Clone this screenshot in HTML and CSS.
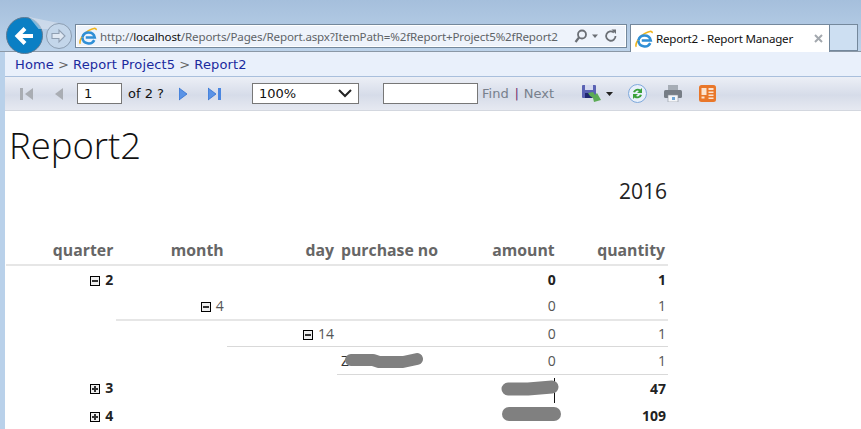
FILE: index.html
```html
<!DOCTYPE html>
<html lang="en">
<head>
<meta charset="utf-8">
<title>Report2 - Report Manager</title>
<link rel="stylesheet" href="styles.css">
</head>
<body>
<svg class="defs" width="0" height="0" aria-hidden="true">
  <symbol id="ie" viewBox="0 0 20 20">
    <path d="M1.500 18.500C-.5 16 4.500 7.500 10.500 4 15 1.400 19.500.4 19 3.500" fill="none" stroke="#f0b51e" stroke-width="1.800"/>
    <path d="M3.800 11.600A7 6.800 0 0 1 17.500 11.600H7.500M17 14.500A7 6.800 0 0 1 3.800 12" fill="none" stroke="#2f8fd6" stroke-width="2.800"/>
  </symbol>
</svg>
<header class="chrome">
  <button class="back" aria-label="Back"><svg width="24" height="24" viewBox="0 0 24 24"><path d="M20 12H5M12 4.500 4.500 12l7.500 7.500" fill="none" stroke="#fff" stroke-width="4"/></svg></button>
  <button class="forward" aria-label="Forward"><svg width="18" height="18" viewBox="0 0 18 18"><path d="M2 6.500h7V3l6 6-6 6v-3.500H2z" fill="#dfe8f3" stroke="#8f9fb2" stroke-width="1.100"/></svg></button>
  <div class="address">
    <svg class="ie" width="18" height="18"><use href="#ie"/></svg>
    <span class="url">http://<b>localhost</b>/Reports/Pages/Report.aspx?ItemPath=%2fReport+Project5%2fReport2</span>
    <svg class="addr-tools" width="46" height="16" viewBox="0 0 46 16"><circle cx="9" cy="6.500" r="4" fill="none" stroke="#6b6f75" stroke-width="1.800"/><path d="M6 9.500 2.500 14" stroke="#6b6f75" stroke-width="2.200"/><path d="M19 6.500h6l-3 3.500z" fill="#6b6f75"/><path d="M42.500 8a4.700 4.700 0 1 1-1.600-3.500" fill="none" stroke="#6b6f75" stroke-width="1.800"/><path d="M38.500 1.500h4.500V6z" fill="#6b6f75"/></svg>
  </div>
  <div class="tab">
    <svg class="ie" width="18" height="18"><use href="#ie"/></svg>
    <span class="tab-title">Report2 - Report Manager</span>
    <svg class="tab-close" width="9" height="9" viewBox="0 0 9 9"><path d="M1 1l7 7M8 1 1 8" stroke="#a3a8ae" stroke-width="2"/></svg>
  </div>
  <div class="new-tab"></div>
</header>
<div class="frame">
  <nav class="crumbs">
    <a>Home</a><span class="sep">&gt;</span><a>Report Project5</a><span class="sep">&gt;</span><a>Report2</a>
  </nav>
  <div class="toolbar">
    <svg class="tool first" width="13" height="14" viewBox="0 0 13 14"><rect x="0" y="1" width="3" height="12" fill="#a9adb3"/><path d="M13 1v12L5 7z" fill="#a9adb3"/></svg>
    <svg class="tool prev" width="8" height="14" viewBox="0 0 8 14"><path d="M8 1v12L0 7z" fill="#a9adb3"/></svg>
    <input class="box page-box" value="1" aria-label="Page">
    <span class="of">of 2 ?</span>
    <svg class="tool next" width="8" height="14" viewBox="0 0 8 14"><path d="M0 1v12l8-6z" fill="#5a93e6" stroke="#2f6fd0" stroke-width=".8"/></svg>
    <svg class="tool last" width="13" height="14" viewBox="0 0 13 14"><path d="M0 1v12l8-6z" fill="#5a93e6" stroke="#2f6fd0" stroke-width=".8"/><rect x="10" y="1" width="3" height="12" fill="#4a86e0"/></svg>
    <div class="box zoom-box"><span>100%</span><svg width="14" height="9" viewBox="0 0 14 9"><path d="M1 1l6 6 6-6" fill="none" stroke="#222" stroke-width="2"/></svg></div>
    <input class="box find-box" aria-label="Find">
    <span class="find">Find</span><span class="bar">|</span><span class="find">Next</span>
    <svg class="tool save" width="19" height="18" viewBox="0 0 19 18"><rect x="0" y="0" width="14" height="13" rx="1" fill="#5a62b4"/><rect x="3" y="0" width="8" height="5" fill="#d5daf0"/><rect x="3" y="8" width="7" height="5" fill="#1f2870"/><path d="M6 8l5-1 2 3 2-2 4 7-7 2-1-4-3-2z" fill="#5cab55"/></svg>
    <svg class="tool drop" width="7" height="4" viewBox="0 0 7 4"><path d="M0 0h7L3.500 4z" fill="#222"/></svg>
    <svg class="tool refresh" width="19" height="19" viewBox="0 0 19 19"><circle cx="9.500" cy="9.500" r="9" fill="#e8f0fb" stroke="#7fa9dc"/><path d="M5 8a5 5 0 0 1 7.500-2.500L14 4v5H9l2-2a3 3 0 0 0-4 1.500z" fill="#3aa13a"/><path d="M14 11a5 5 0 0 1-7.500 2.500L5 15v-5h5l-2 2a3 3 0 0 0 4-1.500z" fill="#3aa13a"/></svg>
    <svg class="tool print" width="18" height="17" viewBox="0 0 18 17"><rect x="4" y="0" width="10" height="6" fill="#a6adb6"/><rect x="0" y="5" width="18" height="8" rx="1.500" fill="#767d86"/><rect x="4" y="10" width="10" height="7" fill="#f4f6f9" stroke="#8a929c" stroke-width=".6"/><rect x="8" y="12" width="3" height="3" fill="#6fa6d8"/></svg>
    <svg class="tool atom" width="17" height="17" viewBox="0 0 17 17"><rect width="17" height="17" rx="2.500" fill="#e9772a"/><path d="M2.500 3h5v7h-5zM9.500 3h5v2h-5zM9.500 6.500h5v1.500h-5zM9.500 9.500h5V11h-5zM2.500 11.500h3v2h-3zM9.500 12.500h5V14h-5z" fill="#fbe3cf"/></svg>
  </div>
  <main class="report">
    <h1>Report2</h1>
    <div class="year">2016</div>
    <table class="grid">
      <thead>
        <tr><th>quarter</th><th>month</th><th>day</th><th class="left">purchase no</th><th>amount</th><th>quantity</th></tr>
      </thead>
      <tbody>
        <tr class="strong"><td><i class="toggle minus"></i>2</td><td></td><td></td><td></td><td>0</td><td>1</td></tr>
        <tr class="ruled-2"><td class="open"></td><td><i class="toggle minus"></i>4</td><td></td><td></td><td>0</td><td>1</td></tr>
        <tr class="ruled-3"><td class="open"></td><td class="open"></td><td><i class="toggle minus"></i>14</td><td></td><td>0</td><td>1</td></tr>
        <tr class="ruled-4"><td class="open"></td><td class="open"></td><td class="open"></td><td class="left"><span class="hidden-val">Z</span><svg class="blot b1" width="84" height="18" viewBox="0 0 84 18"><path d="M8 8H30L36 10H60L74 7" fill="none" stroke="#808080" stroke-width="12" stroke-linecap="round" stroke-linejoin="round"/></svg></td><td>0</td><td>1</td></tr>
        <tr class="strong"><td><i class="toggle plus"></i>3</td><td></td><td></td><td></td><td class="mask"><span class="tick"></span><svg class="blot b2" width="62" height="18" viewBox="0 0 62 18"><path d="M8 10H28L52 8" fill="none" stroke="#808080" stroke-width="13" stroke-linecap="round" stroke-linejoin="round"/></svg></td><td>47</td></tr>
        <tr class="strong"><td><i class="toggle plus"></i>4</td><td></td><td></td><td></td><td class="mask"><svg class="blot b3" width="64" height="18" viewBox="0 0 64 18"><path d="M8 9H53" fill="none" stroke="#808080" stroke-width="14" stroke-linecap="round"/></svg></td><td>109</td></tr>
      </tbody>
    </table>
  </main>
</div>
</body>
</html>
```
FILE: styles.css
```css
* { box-sizing: border-box; }
html, body { margin: 0; height: 100%; overflow: hidden; }
body { background: #fff; font-family: "Open Sans", "Noto Sans", sans-serif; color: #222; }
.defs { display: block; height: 0; }

.chrome {
  height: 52px; display: flex; align-items: flex-start;
  padding: 17px 0 0 6px;
  background: linear-gradient(#a5bfdc, #bdd3ea);
  border-bottom: 1px solid #8b98a6;
}
.back, .forward { padding: 0; display: flex; align-items: center; justify-content: center; flex: none; border-radius: 50%; }
.back { width: 37px; height: 37px; background: #0a7fc4; border: 1px solid #5d7a93; position: relative; z-index: 2; }
.back::after {
  content: ""; position: absolute; left: 22px; top: -1px; width: 32px; height: 12px;
  background: rgba(225, 232, 240, .55); clip-path: polygon(0 0, 100% 55%, 60% 100%, 30% 100%); z-index: -1;
}
.forward { width: 26px; height: 26px; margin: 6px 0 0 3px; background: #c3d6ea; border: 1px solid #8b9db1; position: relative; z-index: 3; }
.address {
  width: 552px; height: 24px; margin: 7px 0 0 3px; padding: 0 7px 0 3px;
  display: flex; align-items: center; gap: 3px;
  background: #eef3fb; border: 1px solid #74889c; box-shadow: inset 0 0 0 1px #fff;
}
.url { flex: 1; font-size: 11.600px; letter-spacing: -.16px; color: #5f6468; white-space: nowrap; font-family: "Noto Sans", sans-serif; }
.url b { font-weight: 400; color: #111; }
.ie { flex: none; }
.addr-tools { flex: none; }
.tab {
  width: 200px; height: 28px; margin: 7px 0 0 3px; padding: 0 6px 0 4px;
  display: flex; align-items: center; gap: 3px;
  background: #fff; border: 1px solid #74889c; border-bottom: 0; position: relative; z-index: 1;
}
.tab-title { flex: 1; font-size: 11.600px; letter-spacing: -.22px; color: #111; white-space: nowrap; font-family: "Noto Sans", sans-serif; }
.tab-close { flex: none; }
.new-tab { width: 28px; height: 27px; margin-top: 7px; background: #cddff2; border: 1px solid #74889c; border-left: 0; }

.frame { border-left: 5px solid #b9d1ea; height: 377px; overflow: hidden; }
.crumbs {
  height: 25px; padding: 1px 0 0 10px; display: flex; align-items: center;
  background: #e9f0fb; border-bottom: 1px solid #a9bfdc;
  font-family: "DejaVu Sans", sans-serif; font-size: 13px; letter-spacing: .15px; color: #1a2a9e;
}
.sep { color: #666; margin: 0 4px; }
.toolbar {
  height: 34px; display: flex; align-items: center; position: relative;
  background: linear-gradient(#eceff6, #d6dce9 55%, #e6e9f1);
  border-bottom: 1px solid #d3d7df;
  font-family: "DejaVu Sans", sans-serif; font-size: 13px;
}
.tool { flex: none; }
.first { margin-left: 15px; }
.prev { margin-left: 22px; }
.box { height: 21px; flex: none; border: 1px solid #777; background: #fff; font: inherit; color: #111; padding: 0 6px; }
.page-box { width: 45px; margin-left: 14px; }
.of { margin-left: 6px; width: 38px; white-space: nowrap; color: #111; }
.next { margin-left: 13px; }
.last { margin-left: 21px; }
.zoom-box { width: 107px; margin-left: 31px; display: flex; align-items: center; justify-content: space-between; }
.find-box { width: 95px; margin-left: 24px; }
.find { color: #77808c; font-size: 13px; margin-left: 4px; }
.bar { color: #6a2a6a; font-size: 12px; margin-left: 6px; margin-right: 1px; }
.save { margin-left: 28px; }
.drop { margin-left: 5px; }
.refresh { margin-left: 15px; }
.print { margin-left: 17px; }
.atom { margin-left: 17px; }

.report { padding-left: 1px; }
h1 { margin: 0; padding: 10px 0 0 3px; height: 67px; font-size: 36.500px; line-height: 48px; font-weight: 300; color: #111; }
.year { width: 661px; height: 55px; text-align: right; font-size: 21px; line-height: 26px; color: #222; }
.grid { width: 662px; table-layout: fixed; border-collapse: collapse; }
.grid th, .grid td { padding: 0 2px 0 0; text-align: right; white-space: nowrap; }
.grid th { height: 32px; font-size: 15.800px; font-weight: 700; color: #666; border-bottom: 2px solid #e6e6e6; padding: 2px 3px 0 0; }
.grid td { height: 27.300px; font-size: 14px; color: #555; position: relative; }
.grid td:nth-child(-n+3) { padding-right: 3px; }
.grid th.left, .grid td.left { text-align: left; padding-left: 4px; }
.strong td { font-weight: 700; color: #222; }
.ruled-2 td { border-bottom: 2px solid #e6e6e6; }
.ruled-3 td, .ruled-4 td { border-bottom: 1px solid #d9d9d9; }
.grid td.open { border-bottom: 0; }
.toggle { display: inline-block; width: 10px; height: 10px; margin-right: 5px; border: 1px solid #000; vertical-align: -1px; background: #eee; position: relative; }
.toggle::before { content: ""; position: absolute; left: 1px; right: 1px; top: 3px; height: 2px; background: #333; }
.plus::after { content: ""; position: absolute; top: 1px; bottom: 1px; left: 3px; width: 2px; background: #333; }
.hidden-val { color: #333; }
.blot { position: absolute; }
.b1 { left: 6px; top: 5px; }
.b2 { left: 53px; top: 4px; }
.b3 { left: 54px; top: 4px; }
.tick { position: absolute; right: 3px; top: 3px; height: 25px; width: 1px; background: #111; }
```
